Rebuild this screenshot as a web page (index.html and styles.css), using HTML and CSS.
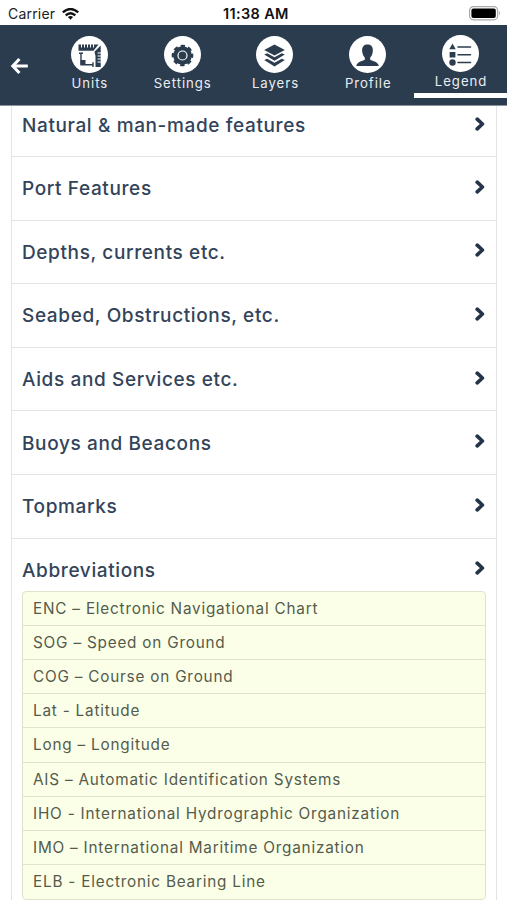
FILE: index.html
```
<!DOCTYPE html>
<html lang="en">
<head>
<meta charset="utf-8">
<title>Legend</title>
<link rel="stylesheet" href="styles.css">
</head>
<body>
<div class="status">
  <span class="carrier">Carrier</span>
  <svg class="wifi" width="17" height="12" viewBox="0 0 17 12"><g fill="none" stroke="#111" stroke-width="2.4"><path d="M.8 4.300Q8.500-2.200 16.200 4.300"/><path d="M3.700 7.400Q8.500 3 13.300 7.400"/></g><path d="M5.900 9.100Q8.500 7 11.100 9.100L8.500 11.800Z" fill="#111"/></svg>
  <span class="time">11:38 AM</span>
  <svg class="battery" width="32" height="15" viewBox="0 0 32 15"><rect x=".6" y=".6" width="28" height="13.200" rx="3.800" fill="#fff" stroke="#aaa" stroke-width="1.200"/><rect x="2.400" y="2.400" width="24.400" height="9.600" rx="2" fill="#000"/><path d="M30 5q2 2.200 0 4.400z" fill="#aaa"/></svg>
</div>
<nav class="bar">
  <a class="back"><svg width="18" height="18" viewBox="0 0 18 18"><path d="M9.400 2L2.800 9l6.600 7M3 9H17.800" fill="none" stroke="#fff" stroke-width="3"/></svg></a>
  <a class="tab"><svg class="icon" viewBox="0 0 37 37"><circle cx="18.500" cy="18.500" r="18.500" fill="#fff"/><g fill="#2c3c4f"><path d="M7.500 8.500H27.500L22.500 14.800H7.500z"/><path d="M29.700 9.500V31H24.500V20L23.500 15.800z"/><path d="M9.500 24h5v4.500h-5z"/></g><path d="M10.500 8v3.500M13.500 8v3.500M16.500 8v3.500M19.500 8v3.500M22.500 8v3.500M30 17h-3.500M30 20h-3.500M30 23h-3.500M30 26h-3.500" stroke="#fff" stroke-width="1"/><path d="M10 17v11.700h12.500M8 17.200h4M22 26.300v4.700" stroke="#2c3c4f" stroke-width="1.400" fill="none"/></svg><span>Units</span></a>
  <a class="tab"><svg class="icon" viewBox="0 0 37 37"><circle cx="18.500" cy="18.500" r="18.500" fill="#fff"/><circle cx="18.500" cy="19.500" r="9" fill="#2c3c4f"/><circle cx="18.500" cy="19.500" r="9" fill="none" stroke="#2c3c4f" stroke-width="3.600" stroke-dasharray="4.070 3" stroke-dashoffset="2" /><circle cx="18.500" cy="19.500" r="9.300" fill="#2c3c4f"/><circle cx="18.500" cy="19.500" r="4.500" fill="none" stroke="#fff" stroke-width="1.200"/></svg><span>Settings</span></a>
  <a class="tab"><svg class="icon" viewBox="0 0 37 37"><circle cx="18.500" cy="18.500" r="18.500" fill="#fff"/><g fill="#2c3c4f"><path d="M18.500 8.500l10.300 5.500-10.300 5.500L8.200 14z"/><path d="M8.200 18.500l3-1.200 7.300 4 7.300-4 3 1.200-10.300 6.300z"/><path d="M8.200 24l3-1.200 7.300 4 7.300-4 3 1.200-10.300 6.500z"/></g></svg><span>Layers</span></a>
  <a class="tab"><svg class="icon" viewBox="0 0 37 37"><circle cx="18.500" cy="18.500" r="18.500" fill="#fff"/><path d="M18.500 8.500c4 0 5.800 2.700 5.300 7-.3 3-1.400 5-2.600 6v2.200c2.500 1.600 8 1.800 8.500 6.300H7.300c.5-4.500 6-4.700 8.500-6.300v-2.200c-1.200-1-2.300-3-2.600-6-.5-4.300 1.300-7 5.300-7z" fill="#2c3c4f"/></svg><span>Profile</span></a>
  <a class="tab active"><svg class="icon" viewBox="0 0 37 37"><circle cx="18.500" cy="18.500" r="18.500" fill="#fff"/><g fill="#2c3c4f"><path d="M10.500 8.500l3.200 5.700H7.300z"/><path d="M7.600 17h5.800v5.500H7.600z"/><circle cx="10.500" cy="27.500" r="3.200"/></g><path d="M16 12h12.500M16 19.700h12.500M16 27.500h12.500" stroke="#2c3c4f" stroke-width="1.600" stroke-linecap="round"/></svg><span>Legend</span></a>
</nav>
<main class="list">
  <section class="row"><h2>Natural &amp; man-made features</h2><svg class="chev" viewBox="0 0 10 14"><path d="M2.200 2.200L7.400 7 2.200 11.800"/></svg></section>
  <section class="row"><h2>Port Features</h2><svg class="chev" viewBox="0 0 10 14"><path d="M2.200 2.200L7.400 7 2.200 11.800"/></svg></section>
  <section class="row"><h2>Depths, currents etc.</h2><svg class="chev" viewBox="0 0 10 14"><path d="M2.200 2.200L7.400 7 2.200 11.800"/></svg></section>
  <section class="row"><h2>Seabed, Obstructions, etc.</h2><svg class="chev" viewBox="0 0 10 14"><path d="M2.200 2.200L7.400 7 2.200 11.800"/></svg></section>
  <section class="row"><h2>Aids and Services etc.</h2><svg class="chev" viewBox="0 0 10 14"><path d="M2.200 2.200L7.400 7 2.200 11.800"/></svg></section>
  <section class="row"><h2>Buoys and Beacons</h2><svg class="chev" viewBox="0 0 10 14"><path d="M2.200 2.200L7.400 7 2.200 11.800"/></svg></section>
  <section class="row"><h2>Topmarks</h2><svg class="chev" viewBox="0 0 10 14"><path d="M2.200 2.200L7.400 7 2.200 11.800"/></svg></section>
  <section class="row open"><h2>Abbreviations</h2><svg class="chev" viewBox="0 0 10 14"><path d="M2.200 2.200L7.400 7 2.200 11.800"/></svg></section>
  <ul class="abbr">
    <li>ENC – Electronic Navigational Chart</li>
    <li>SOG – Speed on Ground</li>
    <li>COG – Course on Ground</li>
    <li>Lat - Latitude</li>
    <li>Long – Longitude</li>
    <li>AIS – Automatic Identification Systems</li>
    <li>IHO - International Hydrographic Organization</li>
    <li>IMO – International Maritime Organization</li>
    <li>ELB - Electronic Bearing Line</li>
  </ul>
</main>
</body>
</html>
```
FILE: styles.css
```
* { box-sizing: border-box; }
body {
  margin: 0;
  height: 900px;
  overflow: hidden;
  display: flex;
  flex-direction: column;
  background: #fff;
  font-family: Inter, "Liberation Sans", sans-serif;
}
.status {
  flex: none;
  height: 25px;
  display: grid;
  grid-template-columns: 54px 157px 1fr 38px;
  align-items: center;
  padding: 2px 0 0 8px;
  color: #222;
  font-size: 14px;
}
.carrier { letter-spacing: 0.2px; }
.time { justify-self: start; margin-left: 4px; font-weight: 600; color: #111; font-size: 14.500px; letter-spacing: 0.350px; white-space: nowrap; }
.bar {
  flex: none;
  height: 81px;
  display: flex;
  background: #2c3c4f;
  border-bottom: 1px solid #8b949e;
}
.back { width: 43px; padding: 32px 0 0 10px; }
.tab {
  width: 92.800px;
  display: flex;
  flex-direction: column;
  align-items: center;
  padding-top: 11px;
  color: #e9edf1;
  font-size: 13.200px;
  line-height: 16px;
  letter-spacing: 0.950px;
}
.tab span { margin: 2px -1px 0 0; }
.icon { width: 37px; height: 37px; }
.active { padding-top: 10px; border-bottom: 5px solid #fff; height: 73px; }
.active span { margin-top: 1px; }
.list {
  flex: 1;
  margin: 0 10px 0 11px;
  border: solid #e4e4e6;
  border-width: 0 1px;
}
.row {
  height: 63.600px;
  display: flex;
  align-items: center;
  justify-content: space-between;
  padding: 0 11px 0 10px;
  border-bottom: 1px solid #e4e4e6;
}
.row:first-child { height: 51px; padding-bottom: 12px; }
.row h2 {
  margin: 2px 0 0;
  font-size: 19px;
  line-height: 24px;
  font-weight: 500;
  color: #33445a;
  letter-spacing: 0.620px;
}
.chev { width: 10px; height: 14px; margin-top: -3px; }
.chev path { fill: none; stroke: #25344a; stroke-width: 3.700; stroke-linejoin: round; stroke-linecap: round; }
.open { height: 52px; padding-bottom: 0; padding-top: 10px; border: 0; }
.abbr {
  list-style: none;
  margin: 0 10px;
  padding: 0;
  border: 1px solid #dfe3cd;
  border-radius: 4px;
  background: #fbffe8;
  overflow: hidden;
}
.abbr li {
  height: 34.200px;
  padding-left: 10px;
  line-height: 33px;
  border-bottom: 1px solid #dfe3cd;
  font-size: 15.300px;
  letter-spacing: 0.790px;
  color: #555b4c;
}
.abbr li:last-child { border: 0; }
```
